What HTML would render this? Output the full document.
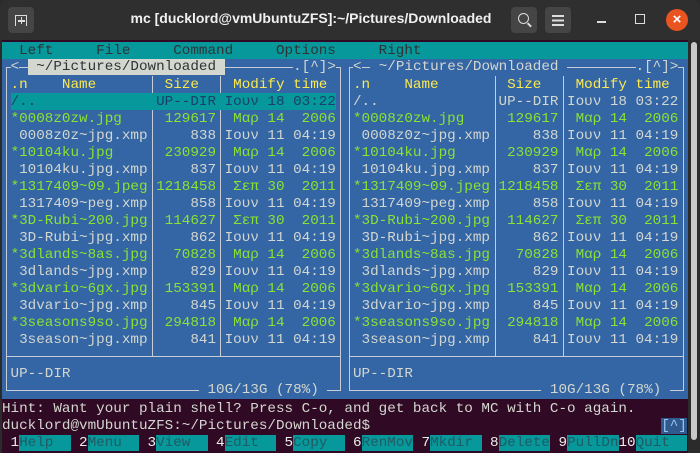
<!DOCTYPE html>
<html><head><meta charset="utf-8"><style>
*{margin:0;padding:0;box-sizing:border-box}
html,body{width:700px;height:453px;overflow:hidden;background:#2b2b2b}
#title{position:absolute;left:0;top:0;width:700px;height:40px;background:#2f2f2f;border-radius:8px 8px 0 0}
#title .t{position:absolute;left:0;width:622px;top:10px;text-align:center;color:#f0f0f0;font:bold 14px "Liberation Sans",sans-serif}
.btn{position:absolute;top:7px;width:26px;height:26px;background:#454545;border-radius:4px}
#term{position:absolute;left:2px;top:40px;width:686px;height:413px;background:#300a24}
#sb{position:absolute;left:688px;top:40px;width:12px;height:413px;background:#2b2b2b}
#sb div{position:absolute;left:3px;top:2px;width:6px;height:398px;background:#c8c8c8;border-radius:3px}
.ln{position:absolute;left:2px;height:17px;line-height:17px;font:14.28px "Liberation Mono",monospace;white-space:pre;color:#d3d7cf;padding-top:1px}
.g{color:#8ae234}.y{color:#fce94f}
.bl{background:#3465a4}
.hl{background:#d3d7cf;color:#2e3436}
.k{color:#eeeeec;background:#300a24}
.tq{background:#06989a;color:#1f5c63}
.h{position:absolute;height:1px;background:#c8ccd4}
.v{position:absolute;width:1px;background:#c8ccd4}
</style></head><body>
<div id="title">
<div class="btn" style="left:8px"><div style="position:absolute;left:7px;top:8px;width:12px;height:11px;border:1.5px solid #ddd;border-bottom:none"></div><div style="position:absolute;left:10px;top:13px;width:7px;height:1.5px;background:#ddd"></div><div style="position:absolute;left:12.7px;top:10.3px;width:1.5px;height:7px;background:#ddd"></div></div>
<div class="t">mc [ducklord@vmUbuntuZFS]:~/Pictures/Downloaded</div>
<div class="btn" style="left:511px"><div style="position:absolute;left:7px;top:6px;width:11px;height:11px;border:1.6px solid #ddd;border-radius:50%"></div><div style="position:absolute;left:16px;top:17px;width:5px;height:1.6px;background:#ddd;transform:rotate(45deg)"></div></div>
<div class="btn" style="left:545px"><div style="position:absolute;left:7px;top:8px;width:12px;height:1.6px;background:#ddd;box-shadow:0 4.5px 0 #ddd,0 9px 0 #ddd"></div></div>
<div style="position:absolute;left:597px;top:21px;width:9px;height:1.6px;background:#ddd"></div>
<div style="position:absolute;left:635px;top:14px;width:10px;height:10px;border:1.5px solid #ddd"></div>
<div style="position:absolute;left:666px;top:9px;width:22px;height:22px;border-radius:50%;background:#e95420;color:#fff;font:bold 15px 'Liberation Sans',sans-serif;text-align:center;line-height:22px">×</div>
</div>
<div id="term"></div>
<div id="sb"><div></div></div>
<div style="position:absolute;left:2px;top:42px;width:686px;height:17px;background:#06989a"></div>
<div style="position:absolute;left:2px;top:59px;width:686px;height:340px;background:#3465a4"></div>
<div style="position:absolute;left:6px;top:67px;width:335px;height:324px;border:1px solid #c8ccd4"></div>
<div style="position:absolute;left:349px;top:67px;width:335px;height:324px;border:1px solid #c8ccd4"></div>
<div class="v" style="left:152px;top:76px;height:281px"></div>
<div class="v" style="left:220px;top:76px;height:281px"></div>
<div class="v" style="left:495px;top:76px;height:281px"></div>
<div class="v" style="left:563px;top:76px;height:281px"></div>
<div class="h" style="left:6px;top:356px;width:335px"></div>
<div class="h" style="left:349px;top:356px;width:335px"></div>
<div style="position:absolute;left:10.6px;top:93px;width:325.7px;height:17px;background:#06989a"></div>

<div class="ln" style="top:42px;color:#2e3436">  Left     File     Command     Options     Right</div>
<div class="ln" style="top:59px;padding-top:0"> <span class="bl">&lt;</span> <span class="hl"> ~/Pictures/Downloaded </span>        <span class="bl">.[^]&gt;</span>  <span class="bl">&lt;</span> <span class="bl"> ~/Pictures/Downloaded </span>        <span class="bl">.[^]&gt;</span></div>
<div class="ln y" style="top:76px"> .n    Name        Size    Modify time   .n    Name        Size    Modify time</div>
<div class="ln" style="top:93px"> <span style="color:#1c3f6e">/..              UP--DIR Ιουν 18 03:22</span>  /..              UP--DIR Ιουν 18 03:22</div>
<div class="ln" style="top:110px"> <span class="g">*0008z0zw.jpg     129617  Μαρ 14  2006</span>  <span class="g">*0008z0zw.jpg     129617  Μαρ 14  2006</span></div>
<div class="ln" style="top:127px">  0008z0z~jpg.xmp     838 Ιουν 11 04:19   0008z0z~jpg.xmp     838 Ιουν 11 04:19</div>
<div class="ln" style="top:144px"> <span class="g">*10104ku.jpg      230929  Μαρ 14  2006</span>  <span class="g">*10104ku.jpg      230929  Μαρ 14  2006</span></div>
<div class="ln" style="top:161px">  10104ku.jpg.xmp     837 Ιουν 11 04:19   10104ku.jpg.xmp     837 Ιουν 11 04:19</div>
<div class="ln" style="top:178px"> <span class="g">*1317409~09.jpeg 1218458  Σεπ 30  2011</span>  <span class="g">*1317409~09.jpeg 1218458  Σεπ 30  2011</span></div>
<div class="ln" style="top:195px">  1317409~peg.xmp     858 Ιουν 11 04:19   1317409~peg.xmp     858 Ιουν 11 04:19</div>
<div class="ln" style="top:212px"> <span class="g">*3D-Rubi~200.jpg  114627  Σεπ 30  2011</span>  <span class="g">*3D-Rubi~200.jpg  114627  Σεπ 30  2011</span></div>
<div class="ln" style="top:229px">  3D-Rubi~jpg.xmp     862 Ιουν 11 04:19   3D-Rubi~jpg.xmp     862 Ιουν 11 04:19</div>
<div class="ln" style="top:246px"> <span class="g">*3dlands~8as.jpg   70828  Μαρ 14  2006</span>  <span class="g">*3dlands~8as.jpg   70828  Μαρ 14  2006</span></div>
<div class="ln" style="top:263px">  3dlands~jpg.xmp     829 Ιουν 11 04:19   3dlands~jpg.xmp     829 Ιουν 11 04:19</div>
<div class="ln" style="top:280px"> <span class="g">*3dvario~6gx.jpg  153391  Μαρ 14  2006</span>  <span class="g">*3dvario~6gx.jpg  153391  Μαρ 14  2006</span></div>
<div class="ln" style="top:297px">  3dvario~jpg.xmp     845 Ιουν 11 04:19   3dvario~jpg.xmp     845 Ιουν 11 04:19</div>
<div class="ln" style="top:314px"> <span class="g">*3seasons9so.jpg  294818  Μαρ 14  2006</span>  <span class="g">*3seasons9so.jpg  294818  Μαρ 14  2006</span></div>
<div class="ln" style="top:331px">  3season~jpg.xmp     841 Ιουν 11 04:19   3season~jpg.xmp     841 Ιουν 11 04:19</div>
<div class="ln" style="top:365px"> UP--DIR                                 UP--DIR</div>
<div class="ln" style="top:382px;padding-top:0">                       <span class="bl"> 10G/13G (78%) </span>                         <span class="bl"> 10G/13G (78%) </span></div>
<div class="ln" style="top:400px">Hint: Want your plain shell? Press C-o, and get back to MC with C-o again.</div>
<div class="ln" style="top:417px">ducklord@vmUbuntuZFS:~/Pictures/Downloaded$                                  <span style="color:#9ec3ef;background:#2f5a8f">[^]</span></div>
<div class="ln" style="top:434px"><span class="k"> 1</span><span class="tq">Help  </span><span class="k"> 2</span><span class="tq">Menu  </span><span class="k"> 3</span><span class="tq">View  </span><span class="k"> 4</span><span class="tq">Edit  </span><span class="k"> 5</span><span class="tq">Copy  </span><span class="k"> 6</span><span class="tq">RenMov</span><span class="k"> 7</span><span class="tq">Mkdir </span><span class="k"> 8</span><span class="tq">Delete</span><span class="k"> 9</span><span class="tq">PullDn</span><span class="k">10</span><span class="tq">Quit  </span></div>
</body></html>
